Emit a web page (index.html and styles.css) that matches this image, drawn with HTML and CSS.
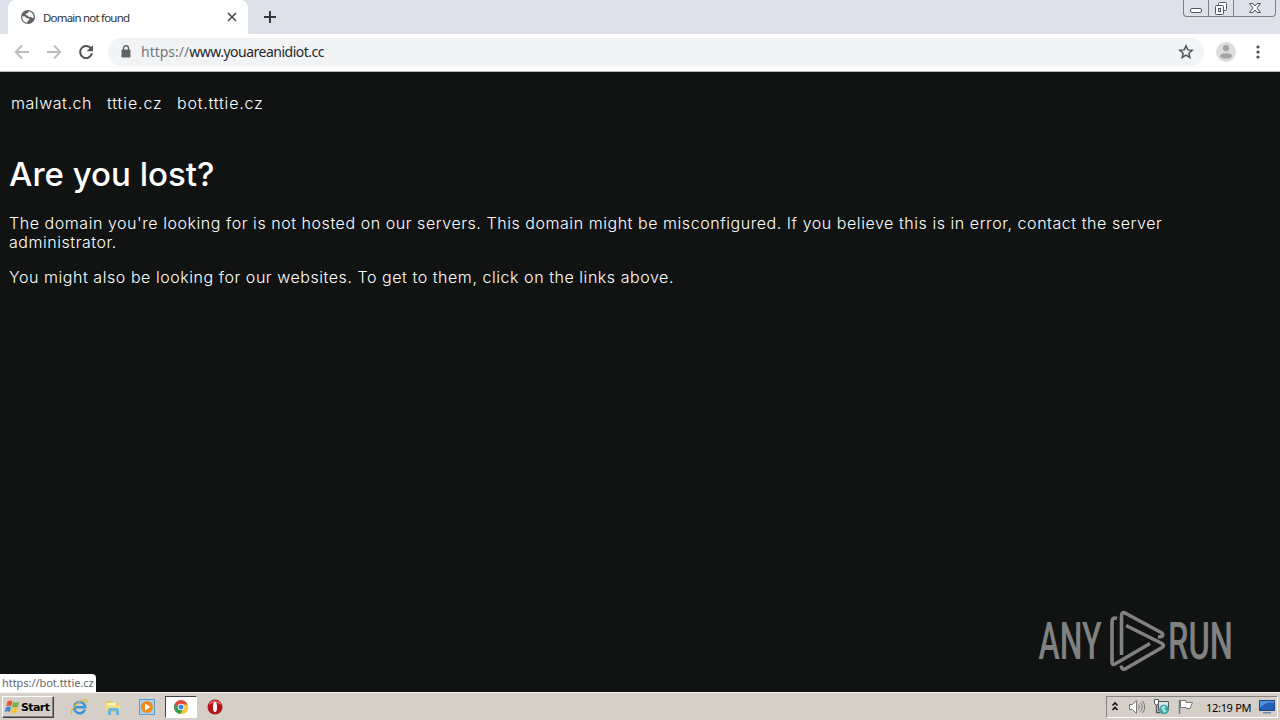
FILE: index.html
```html
<!DOCTYPE html>
<html lang="en">
<head>
  <meta charset="UTF-8" />
  <title>Domain not found</title>
  <link rel="stylesheet" href="styles.css">
</head>
<body>
  <div class="tab-strip">
    <div class="tab">
      <svg class="favicon" width="16" height="16" viewBox="0 0 16 16">
        <circle cx="8" cy="8" r="7" fill="#5f6368"/>
        <path d="M8.800 2.200l-1 2-2 .6v1.500l2 .3 1 1.400 2-.3 1.200 1 1.600.2c.3-3.300-1.800-6.200-4.800-6.700zM2.200 7.200c-.3 3.300 1.800 6.200 5.300 6.600v-1.700l1.800-1.200-.5-1.400-2.400-.4-1.200-1.600z" fill="#fff"/>
      </svg>
      <span class="tab-title">Domain not found</span>
      <svg class="tab-close" width="10" height="10" viewBox="0 0 10 10">
        <path d="M1 1l8 8M9 1L1 9" stroke="#4a4d51" stroke-width="1.700"/>
      </svg>
    </div>
    <svg class="new-tab" width="14" height="14" viewBox="0 0 14 14">
      <path d="M7 1v12M1 7h12" stroke="#35383d" stroke-width="2"/>
    </svg>
    <div class="window-buttons">
      <span class="win-min"><svg width="14" height="17" viewBox="0 0 14 17"><rect x="1.500" y="8.500" width="11" height="4" rx="1.500" fill="#fff" stroke="#50545c"/></svg></span>
      <span class="win-max"><svg width="14" height="17" viewBox="0 0 14 17"><g fill="#fff" stroke="#50545c"><rect x="4.500" y="2.500" width="8" height="8" rx="1"/><rect x="1.500" y="5.500" width="8" height="9" rx="1"/><rect x="4.500" y="8.500" width="2" height="3"/></g></svg></span>
      <span class="win-close"><svg width="14" height="17" viewBox="0 0 14 17"><path d="M1.500 3.500h3.500l2 2.500 2-2.500h3.500L9 8l3.500 4.500H9L7 10l-2 2.500H1.500L5 8z" fill="#fff" stroke="#50545c"/></svg></span>
    </div>
  </div>

  <div class="toolbar">
    <svg width="16" height="16" viewBox="0 0 16 16"><path d="M15 8H2M8 1.500L1.700 8 8 14.500" fill="none" stroke="#babcbe" stroke-width="1.800"/></svg>
    <svg width="16" height="16" viewBox="0 0 16 16"><path d="M1 8h13M8 1.500L14.300 8 8 14.500" fill="none" stroke="#babcbe" stroke-width="1.800"/></svg>
    <svg width="16" height="16" viewBox="0 0 16 16"><path d="M13.300 5A6 6 0 1 0 14 9.300" fill="none" stroke="#505357" stroke-width="2"/><path d="M15 1v6.300H8.700z" fill="#505357"/></svg>
    <div class="omnibox">
      <svg class="lock" width="10" height="13" viewBox="0 0 10 13"><rect x=".5" y="4.500" width="9" height="8" rx="1" fill="#5f6368"/><path d="M2.500 5V3.300a2.500 2.500 0 0 1 5 0V5" fill="none" stroke="#5f6368" stroke-width="1.400"/></svg>
      <span class="url"><span class="scheme">https://</span><span class="host">www.youareanidiot.cc</span></span>
      <svg class="star" width="16" height="16" viewBox="0 0 16 16"><path d="M8 1.900l1.800 4 4.300.4-3.200 2.900.9 4.200L8 11.200l-3.800 2.200.9-4.200-3.200-2.900 4.300-.4z" fill="none" stroke="#505357" stroke-width="1.500"/></svg>
    </div>
    <svg class="avatar" width="20" height="20" viewBox="0 0 20 20"><circle cx="10" cy="10" r="10" fill="#dcdddf"/><circle cx="10" cy="6.200" r="3.100" fill="#a3a5a7"/><ellipse cx="10" cy="14" rx="6" ry="2.800" fill="#a3a5a7"/></svg>
    <svg class="menu" width="4" height="16" viewBox="0 0 4 16"><g fill="#4c4f53"><circle cx="2" cy="3" r="1.600"/><circle cx="2" cy="8" r="1.600"/><circle cx="2" cy="13" r="1.600"/></g></svg>
  </div>

  <main class="page">
    <nav>
      <a class="nav-a">malwat.ch</a>
      <a class="nav-b">tttie.cz</a>
      <a class="nav-c">bot.tttie.cz</a>
    </nav>
    <h1>Are you lost?</h1>
    <p class="lead">The domain you're looking for is not hosted on our servers. This domain might be misconfigured. If you believe this is in error, contact the server administrator.</p>
    <p class="hint">You might also be looking for our websites. To get to them, click on the links above.</p>

    <svg class="watermark" width="220" height="75" viewBox="0 0 220 75">
      <g class="watermark-text">
        <text x="3.500" y="54" textLength="63" lengthAdjust="spacingAndGlyphs">ANY</text>
        <text x="133" y="54" textLength="65" lengthAdjust="spacingAndGlyphs">RUN</text>
      </g>
      <g fill="none" stroke="#808181" stroke-width="3.600" stroke-linejoin="round">
        <path d="M82 13.500q-5-1.500-5 3V57q0 3.500 3 2L115 38.500"/>
        <path d="M86.500 50V11q0-5 4.500-2.500l36 19.500q2.500 4-4 4"/>
        <path d="M91 20.500L127 38.500q3 2 0 4L91 63.500q-4 2.500-5-3"/>
      </g>
    </svg>
    <div class="status-bubble">https://bot.tttie.cz</div>
  </main>

  <footer class="taskbar">
    <div class="start-button">
      <svg width="17" height="16" viewBox="0 0 17 16">
        <path d="M3.500 2.500q2.500-1.800 5 0L7.300 7.300q-2.500-1.500-5 0z" fill="#e5582b"/>
        <path d="M9.300 3q2.500 1.500 6 0L14 7.700q-3 1.400-6 0z" fill="#72b343"/>
        <path d="M2 8.200q2.500-1.500 5 0L5.700 13q-2.500-1.500-5 0z" fill="#3b88d3"/>
        <path d="M7.800 8.600q3 1.400 6 0l-1.300 4.800q-3 1.500-6 0z" fill="#f7c52f"/>
      </svg>
      <span>Start</span>
    </div>
    <div class="quick-launch">
      <span><svg width="18" height="18" viewBox="0 0 18 18"><path d="M15 11.500A5.600 5.600 0 1 1 15.300 9.300H5" fill="none" stroke="#3796dc" stroke-width="2.400"/><path d="M2 16.500C-1 13 9 1 16.500 2q1 1-.3 3" fill="none" stroke="#e5b83b" stroke-width="1.300"/></svg></span>
      <span><svg width="18" height="18" viewBox="0 0 18 18"><path d="M2 3h5l1 2h7v9H2z" fill="#e8c765"/><path d="M3 5h9v3H3z" fill="#fff5bd"/><path d="M1.500 7H16v6H1.500z" fill="#f4dc86"/><path d="M4 17v-5q0-2 2-2h7q2 0 2 2v5h-3v-4H7v4z" fill="#66b6df"/></svg></span>
      <span><svg width="18" height="18" viewBox="0 0 18 18"><rect x="1.500" y="1.500" width="15" height="15" fill="#a9d1ee" stroke="#5d9dcb"/><circle cx="9" cy="9" r="6" fill="#f18a1b"/><path d="M7 5.500L12.500 9 7 12.500z" fill="#fff"/></svg></span>
      <span class="active"><svg width="16" height="16" viewBox="0 0 16 16"><circle cx="8" cy="8" r="7" fill="#e24a38"/><path d="M2 4.500A7 7 0 0 0 7.500 15L10.500 9.500H5.500z" fill="#2fa254"/><path d="M7.500 15A7 7 0 0 0 14.600 5.500H8.500l2 4z" fill="#f8cb33"/><circle cx="8" cy="8" r="3.300" fill="#fff"/><circle cx="8" cy="8" r="2.500" fill="#4285e8"/></svg></span>
      <span><svg width="18" height="18" viewBox="0 0 18 18"><circle cx="9" cy="9" r="7.500" fill="#b3151c"/><path d="M3 6q6-5 12 0" stroke="#d9605f" stroke-width="2" fill="none"/><ellipse cx="9" cy="9" rx="2" ry="5.200" fill="#fff"/></svg></span>
    </div>
    <div class="tray">
      <svg class="chevrons" width="8" height="12" viewBox="0 0 8 12"><path d="M1.500 4.500L4 2l2.500 2.500M1.500 9L4 6.500 6.500 9" fill="none" stroke="#111" stroke-width="1.600"/></svg>
      <svg class="volume" width="18" height="16" viewBox="0 0 18 16"><path d="M1.500 5.500h3l4-4v13l-4-4h-3z" fill="#fff" stroke="#77777a"/><path d="M10.500 5.500q2 2.500 0 5M12.500 3.500q3.500 4.500 0 9M14.500 2q4.500 6 0 12" fill="none" stroke="#77777a"/></svg>
      <svg class="network" width="18" height="18" viewBox="0 0 18 18"><path d="M5.500 3.500h10v9h-10z" fill="#d5e6e6" stroke="#55595b"/><path d="M1.500 1.500h4V5q0 2-2 2t-2-2z" fill="#fff" stroke="#55595b"/><path d="M3.500 7v7.500h4" fill="none" stroke="#55595b" stroke-width="1.300"/><circle cx="11" cy="11.500" r="4.800" fill="#37a3a4"/><path d="M8 10q3-4 5-1l-2 2 3 2-3 2z" fill="#a7e0da"/></svg>
      <svg class="flag" width="18" height="16" viewBox="0 0 18 16"><path d="M2.500 1v14" stroke="#77777a" stroke-width="1.500"/><path d="M3.500 1.500H9v2h6.500L13 9.500H9v-1H3.500z" fill="#fff" stroke="#77777a"/></svg>
      <span class="clock">12:19 PM</span>
      <svg class="desktop" width="16" height="14" viewBox="0 0 16 14"><path d="M.5.5h15v10H.5z" fill="#255eb5" stroke="#194784"/><path d="M1 8Q8 1 15 3V1H1z" fill="#4e91dc"/><path d="M4 12h8v1.500H4z" fill="#668db8"/></svg>
    </div>
  </footer>
</body>
</html>
```
FILE: styles.css
```css
* {
  box-sizing: border-box;
}

body {
  margin: 0;
  width: 1280px;
  height: 720px;
  display: flex;
  flex-direction: column;
  overflow: hidden;
  font-family: "DejaVu Sans", sans-serif;
}

svg {
  display: block;
  flex: none;
}

/* browser chrome */
.tab-strip {
  display: flex;
  align-items: center;
  height: 34px;
  padding-left: 8px;
  background: #dee1e9;
}

.tab {
  display: flex;
  align-items: center;
  width: 240px;
  height: 34px;
  padding: 0 11px 0 12px;
  border-radius: 8px 8px 0 0;
  background: #fff;
}

.tab-title {
  flex: 1;
  margin-left: 7px;
  font: 11.500px "Noto Sans", sans-serif;
  letter-spacing: -0.8px;
  color: #303236;
}

.new-tab {
  margin-left: 15px;
}

.window-buttons {
  display: flex;
  align-self: flex-start;
  width: 93px;
  height: 17px;
  margin: 0 4px 0 auto;
  border: 1px solid #7c8088;
  border-top: 0;
  border-radius: 0 0 4px 4px;
}

.window-buttons span {
  display: flex;
  justify-content: center;
  width: 25px;
  border-right: 1px solid #7c8088;
}

.window-buttons .win-close {
  flex: 1;
  border-right: 0;
}

.toolbar {
  display: flex;
  align-items: center;
  gap: 16px;
  height: 38px;
  padding: 0 20px 2px 14px;
  background: #fff;
  border-bottom: 1px solid #b5b7b9;
}

.omnibox {
  display: flex;
  align-items: center;
  width: 1096px;
  height: 28px;
  margin-left: -2px;
  padding: 0 10px 0 13px;
  border-radius: 14px;
  background: #f1f3f4;
}

.url {
  flex: 1;
  margin-left: 10px;
  font: 14px "Noto Sans", sans-serif;
  color: #25282c;
}

.scheme {
  color: #74777b;
}

.host {
  letter-spacing: -0.5px;
}

.avatar {
  margin-left: -4px;
}

.menu {
  margin-left: 4px;
}

/* page */
.page {
  position: relative;
  height: 620px;
  padding: 22px 10px 0;
  background: #101312;
  color: #fff;
  font-family: Inter, sans-serif;
  font-weight: 300;
  font-size: 16px;
  line-height: 19px;
  letter-spacing: 0.55px;
}

nav {
  display: flex;
  padding-left: 1px;
}

.nav-a {
  width: 96px;
}

.nav-b {
  width: 70px;
  letter-spacing: 0.9px;
}

.nav-c {
  letter-spacing: 0.8px;
}

h1 {
  margin: 41px 0 0 -1px;
  font-size: 33px;
  font-weight: 500;
  line-height: 40px;
  letter-spacing: 0;
}

.page p {
  margin: 20px 0 0 -1px;
}

.page .hint {
  margin-top: 16px;
}

.watermark {
  position: absolute;
  left: 1035px;
  top: 533px;
}

.watermark-text {
  font: 500 52px Roboto, sans-serif;
  letter-spacing: 0;
  fill: #808181;
}

.status-bubble {
  position: absolute;
  left: 0;
  bottom: 0;
  width: 96px;
  height: 18px;
  padding-left: 2px;
  border-radius: 0 4px 0 0;
  background: #fff;
  color: #65686c;
  font: 11px/18px "Noto Sans", sans-serif;
  letter-spacing: -0.05px;
  white-space: nowrap;
}

/* taskbar */
.taskbar {
  display: flex;
  align-items: center;
  height: 28px;
  padding: 1px 2px 0;
  border-top: 1px solid #f7f5f2;
  background: #d5cfc7;
}

.start-button {
  display: flex;
  align-items: center;
  width: 52px;
  height: 22px;
  padding-left: 1px;
  border: 1px solid;
  border-color: #fff #404040 #404040 #fff;
  box-shadow: inset -1px -1px #87837e;
  font: bold 11px "DejaVu Sans", sans-serif;
  letter-spacing: -0.6px;
  color: #000;
}

.quick-launch {
  display: flex;
  margin-left: 9px;
  gap: 2px;
}

.quick-launch span {
  display: flex;
  align-items: center;
  justify-content: center;
  width: 32px;
  height: 22px;
}

.quick-launch .active {
  border: 1px solid;
  border-color: #404040 #fff #fff #404040;
  background: #fff;
}

.tray {
  display: flex;
  align-items: center;
  width: 172px;
  height: 22px;
  margin-left: auto;
  padding-left: 4px;
  border: 1px solid;
  border-color: #87837e #fff #fff #87837e;
}

.volume {
  margin-left: 9px;
}

.network {
  margin-left: 7px;
}

.flag {
  margin-left: 6px;
}

.clock {
  width: 46px;
  margin: 0 7px 0 11px;
  font: 11px "Noto Sans", sans-serif;
  letter-spacing: -0.3px;
  white-space: nowrap;
  color: #000;
}
```
